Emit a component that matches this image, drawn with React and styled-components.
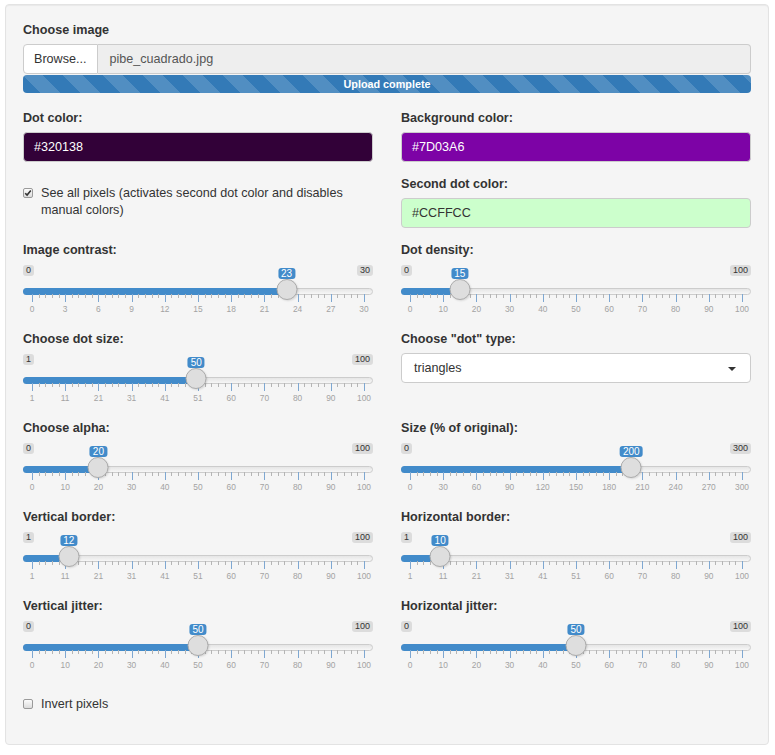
import styled, { createGlobalStyle } from 'styled-components';

const GlobalStyle = createGlobalStyle`
  * { box-sizing: border-box; }
  body {
    margin: 0;
    background: #fff;
    font-family: "Liberation Sans", Arial, sans-serif;
    font-size: 12.6px;
    color: #333;
  }
`;

const Page = styled.div`
  padding: 4px 6px 8px 5px;
`;

const Well = styled.div`
  width: 764px;
  background: #f5f5f5;
  border: 1px solid #e3e3e3;
  border-radius: 4px;
  box-shadow: inset 0 1px 1px rgba(0, 0, 0, 0.05);
  padding: 16px 17px 15px;
`;

const Grid = styled.div`
  display: grid;
  grid-template-columns: 350px 350px;
  column-gap: 28px;
  align-items: start;
`;

const Group = styled.div`
  grid-column: ${(p) => (p.$full ? '1 / -1' : 'auto')};
  margin-bottom: ${(p) => p.$mb || 0}px;
`;

const Label = styled.div`
  font-weight: bold;
  line-height: 18px;
  margin-bottom: 5px;
`;

/* file input */
const FileRow = styled.div`
  display: flex;
  height: 30px;
`;

const BrowseButton = styled.div`
  display: flex;
  align-items: center;
  padding: 0 10px;
  background: #fff;
  border: 1px solid #ccc;
  border-radius: 4px 0 0 4px;
  color: #333;
`;

const FileName = styled.div`
  flex: 1;
  display: flex;
  align-items: center;
  padding: 0 12px;
  background: #eee;
  border: 1px solid #ccc;
  border-left: none;
  border-radius: 0 4px 4px 0;
  color: #555;
`;

const Progress = styled.div`
  margin-top: 1px;
  height: 18px;
  border-radius: 4px;
  background-color: #337ab7;
  background-image: linear-gradient(
    45deg,
    rgba(255, 255, 255, 0.15) 25%,
    transparent 25%,
    transparent 50%,
    rgba(255, 255, 255, 0.15) 50%,
    rgba(255, 255, 255, 0.15) 75%,
    transparent 75%,
    transparent
  );
  background-size: 40px 40px;
  color: #fff;
  font-size: 10.8px;
  font-weight: bold;
  line-height: 18px;
  text-align: center;
`;

/* colour inputs */
const ColorField = styled.div`
  margin-top: 1px;
  height: 30px;
  display: flex;
  align-items: center;
  padding: 0 10px;
  border: 1px solid #ccc;
  border-radius: 4px;
  background: ${(p) => p.$bg};
  color: ${(p) => p.$fg};
`;

/* checkbox */
const CheckRow = styled.label`
  display: flex;
  align-items: flex-start;
  gap: 8px;
  margin-top: 10px;
  margin-bottom: ${(p) => p.$mb || 0}px;
  line-height: 17px;
`;

const Box = styled.span`
  flex: none;
  width: 10px;
  height: 10px;
  margin-top: 3px;
  border: 1px solid #9a9a9a;
  border-radius: 2px;
  background: linear-gradient(#fcfcfc, #dcdcdc);
  display: flex;
  align-items: center;
  justify-content: center;
`;

function Checkbox({ checked, children, mb }) {
  return (
    <CheckRow $mb={mb}>
      <Box>
        {checked && (
          <svg width="8" height="8" viewBox="0 0 8 8">
            <path d="M1.2 4.2 L3.1 6.1 L6.8 1.6" fill="none" stroke="#333" strokeWidth="1.6" />
          </svg>
        )}
      </Box>
      <span>{children}</span>
    </CheckRow>
  );
}

/* select */
const Select = styled.div`
  position: relative;
  height: 30px;
  display: flex;
  align-items: center;
  padding: 0 12px;
  background: #fff;
  border: 1px solid #ccc;
  border-radius: 4px;
  color: #333;

  &::after {
    content: '';
    position: absolute;
    right: 14px;
    top: 13px;
    border-style: solid;
    border-width: 4px 4px 0 4px;
    border-color: #333 transparent transparent transparent;
  }
`;

/* range slider */
const Irs = styled.div`
  position: relative;
  height: 66px;
`;

const MinMax = styled.span`
  position: absolute;
  top: 1px;
  ${(p) => (p.$side === 'right' ? 'right: 0;' : 'left: 0;')}
  padding: 0 3px;
  font-size: 9px;
  line-height: 11px;
  color: #333;
  background: rgba(0, 0, 0, 0.1);
  border-radius: 3px;
`;

const Line = styled.div`
  position: absolute;
  left: 0;
  right: 0;
  top: 24px;
  height: 7px;
  border: 1px solid #ccc;
  border-radius: 8px;
  background: linear-gradient(to bottom, #ddd -50%, #fff 150%);
`;

const Bar = styled.div`
  position: absolute;
  left: 0;
  top: 24px;
  height: 7px;
  background: #428bca;
  border-radius: 8px 0 0 8px;
`;

const Handle = styled.div`
  position: absolute;
  top: 15px;
  width: 21px;
  height: 21px;
  transform: translateX(-50%);
  border-radius: 50%;
  background: #dedede;
  border: 1px solid #acacac;
  box-shadow: 1px 1px 2px rgba(0, 0, 0, 0.12);
`;

const Single = styled.span`
  position: absolute;
  top: 4px;
  transform: translateX(-50%);
  padding: 0 3px;
  font-size: 10px;
  line-height: 11px;
  color: #fff;
  background: #428bca;
  border-radius: 3px;
  white-space: nowrap;
`;

const Scale = styled.div`
  position: absolute;
  left: 9px;
  right: 9px;
  top: 30px;
  height: 20px;
`;

const Tick = styled.span`
  position: absolute;
  top: 0;
  width: 1px;
  height: ${(p) => (p.$small ? 4 : 8)}px;
  background: ${(p) => (p.$small ? '#b5b5b5' : '#7ea7d1')};
`;

const TickText = styled.span`
  position: absolute;
  top: 10px;
  transform: translateX(-50%);
  font-size: 8.4px;
  line-height: 10px;
  color: #a3a3a3;
  white-space: nowrap;
`;

function RangeSlider({ min, max, value }) {
  const f = (value - min) / (max - min);
  const pos = `calc(9px + (100% - 18px) * ${f})`;
  const labels = Array.from({ length: 11 }, (_, i) => Math.round(min + (i * (max - min)) / 10));
  const minors = [];
  for (let i = 0; i < 10; i++) {
    for (let j = 1; j < 5; j++) minors.push(i * 10 + j * 2);
  }
  return (
    <Irs>
      <MinMax>{min}</MinMax>
      <MinMax $side="right">{max}</MinMax>
      <Line />
      <Bar style={{ width: pos }} />
      <Scale>
        {minors.map((m) => (
          <Tick key={'s' + m} $small style={{ left: `${m}%` }} />
        ))}
        {labels.map((v, i) => (
          <Tick key={'b' + i} style={{ left: `${i * 10}%` }} />
        ))}
        {labels.map((v, i) => (
          <TickText key={'t' + i} style={{ left: `${i * 10}%` }}>
            {v}
          </TickText>
        ))}
      </Scale>
      <Handle style={{ left: pos }} />
      <Single style={{ left: pos }}>{value}</Single>
    </Irs>
  );
}

function SliderInput({ label, min, max, value }) {
  return (
    <Group>
      <Label>{label}</Label>
      <RangeSlider min={min} max={max} value={value} />
    </Group>
  );
}

function ColorInput({ label, bg, fg }) {
  return (
    <Group $mb={13}>
      <Label>{label}</Label>
      <ColorField $bg={bg} $fg={fg}>
        {bg.toUpperCase()}
      </ColorField>
    </Group>
  );
}

export default function App() {
  return (
    <Page>
      <GlobalStyle />
      <Well>
        <Grid>
          <Group $full $mb={16}>
            <Label>Choose image</Label>
            <FileRow>
              <BrowseButton>Browse...</BrowseButton>
              <FileName>pibe_cuadrado.jpg</FileName>
            </FileRow>
            <Progress>Upload complete</Progress>
          </Group>

          <ColorInput label="Dot color:" bg="#320138" fg="#fff" />
          <ColorInput label="Background color:" bg="#7D03A6" fg="#fff" />

          <Group>
            <Checkbox checked>
              See all pixels (activates second dot color and disables manual colors)
            </Checkbox>
          </Group>
          <ColorInput label="Second dot color:" bg="#CCFFCC" fg="#333" />

          <SliderInput label="Image contrast:" min={0} max={30} value={23} />
          <SliderInput label="Dot density:" min={0} max={100} value={15} />

          <SliderInput label="Choose dot size:" min={1} max={100} value={50} />
          <Group>
            <Label>Choose "dot" type:</Label>
            <Select>triangles</Select>
          </Group>

          <SliderInput label="Choose alpha:" min={0} max={100} value={20} />
          <SliderInput label="Size (% of original):" min={0} max={300} value={200} />

          <SliderInput label="Vertical border:" min={1} max={100} value={12} />
          <SliderInput label="Horizontal border:" min={1} max={100} value={10} />

          <SliderInput label="Vertical jitter:" min={0} max={100} value={50} />
          <SliderInput label="Horizontal jitter:" min={0} max={100} value={50} />

          <Group $full>
            <Checkbox mb={16}>Invert pixels</Checkbox>
          </Group>
        </Grid>
      </Well>
    </Page>
  );
}
